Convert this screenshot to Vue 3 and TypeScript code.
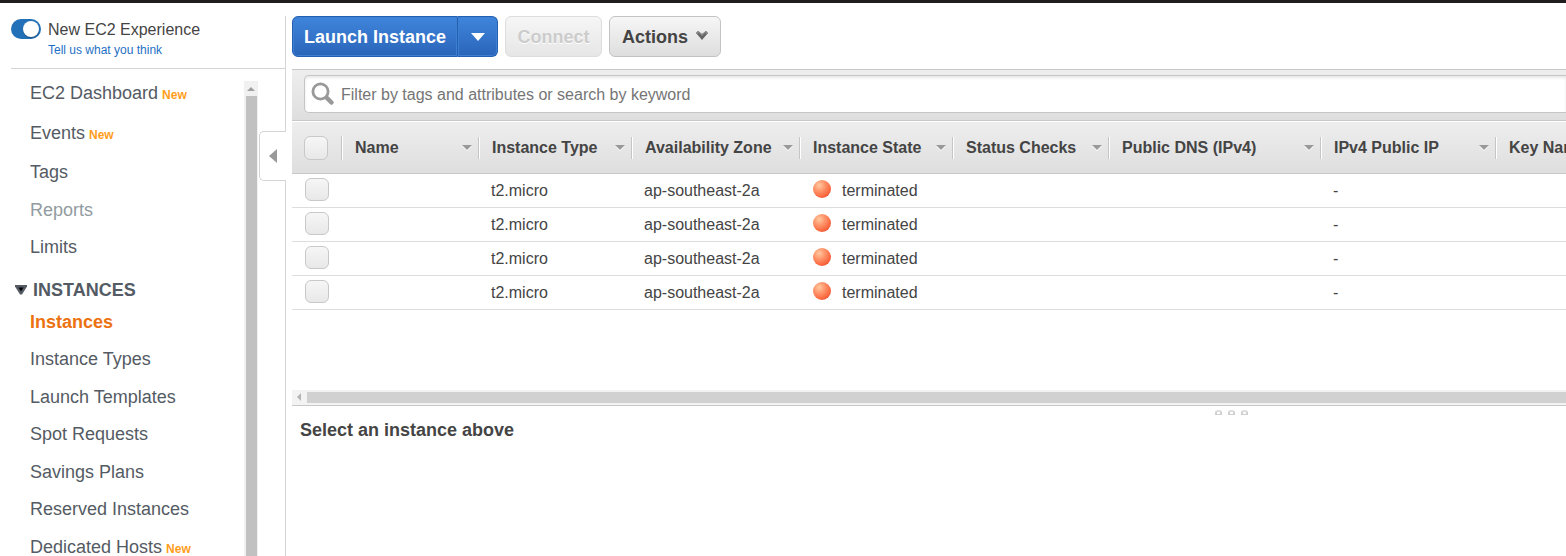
<script setup lang="ts">
import { ref } from 'vue'

interface NavItem {
  label: string
  isNew?: boolean
  muted?: boolean
  active?: boolean
}

interface Column {
  key: string
  label: string
}

interface Instance {
  id: number
  type: string
  zone: string
  state: string
  ip: string
  selected: boolean
}

const newExperience = ref(true)
const filter = ref('')
const allSelected = ref(false)

const generalNav: NavItem[] = [
  { label: 'EC2 Dashboard', isNew: true },
  { label: 'Events', isNew: true },
  { label: 'Tags' },
  { label: 'Reports', muted: true },
  { label: 'Limits' },
]

const instanceNav: NavItem[] = [
  { label: 'Instances', active: true },
  { label: 'Instance Types' },
  { label: 'Launch Templates' },
  { label: 'Spot Requests' },
  { label: 'Savings Plans' },
  { label: 'Reserved Instances' },
  { label: 'Dedicated Hosts', isNew: true },
]

const columns: Column[] = [
  { key: 'name', label: 'Name' },
  { key: 'type', label: 'Instance Type' },
  { key: 'zone', label: 'Availability Zone' },
  { key: 'state', label: 'Instance State' },
  { key: 'checks', label: 'Status Checks' },
  { key: 'dns', label: 'Public DNS (IPv4)' },
  { key: 'ip', label: 'IPv4 Public IP' },
  { key: 'keyname', label: 'Key Name' },
]

const instances = ref<Instance[]>(
  [1, 2, 3, 4].map((id) => ({
    id,
    type: 't2.micro',
    zone: 'ap-southeast-2a',
    state: 'terminated',
    ip: '-',
    selected: false,
  })),
)

function toggleAll() {
  instances.value.forEach((row) => (row.selected = allSelected.value))
}
</script>

<template>
  <div class="console">
    <aside class="sidebar">
      <header class="experience">
        <input id="experience" v-model="newExperience" class="switch" type="checkbox" />
        <div class="experience-text">
          <label for="experience">New EC2 Experience</label>
          <a href="#feedback">Tell us what you think</a>
        </div>
      </header>

      <div class="nav-pane">
        <nav class="nav" aria-label="EC2">
          <ul class="nav-list general">
            <li v-for="item in generalNav" :key="item.label">
              <a href="#" :class="{ muted: item.muted }">{{ item.label }}</a>
              <span v-if="item.isNew" class="new">New</span>
            </li>
          </ul>
          <button class="section" type="button">
            <svg width="12" height="10" viewBox="0 0 12 10" aria-hidden="true">
              <path d="M0 0h12v1.5L7 9.5H5L0 1.5z" fill="#545b64" />
              <path d="M3.5 2.5h5L6 6.5z" fill="#000" />
            </svg>
            INSTANCES
          </button>
          <ul class="nav-list services">
            <li v-for="item in instanceNav" :key="item.label">
              <a href="#" :class="{ active: item.active }">{{ item.label }}</a>
              <span v-if="item.isNew" class="new">New</span>
            </li>
          </ul>
        </nav>
        <div class="vscroll" aria-hidden="true">
          <svg width="14" height="15" viewBox="0 0 14 15"><path d="M3 10l4-4 4 4z" fill="#a0a0a0" /></svg>
          <div class="vthumb"></div>
        </div>
      </div>

      <button class="collapse" type="button" aria-label="Collapse navigation">
        <svg width="8" height="14" viewBox="0 0 8 14" aria-hidden="true"><path d="M8 0v14L0 7z" fill="#999" /></svg>
      </button>
    </aside>

    <main class="main">
      <div class="toolbar">
        <div class="split">
          <button class="btn primary launch" type="button">Launch Instance</button>
          <button class="btn primary more" type="button" aria-label="More launch options">
            <svg width="14" height="8" viewBox="0 0 14 8" aria-hidden="true"><path d="M0 0h14L7 8z" fill="#fff" /></svg>
          </button>
        </div>
        <button class="btn connect" type="button" disabled>Connect</button>
        <button class="btn actions" type="button">
          Actions
          <svg width="12" height="9" viewBox="0 0 12 9" aria-hidden="true">
            <path d="M0 2L2 0l4 3 4-3 2 2-6 7z" fill="#666" />
            <path d="M0 2L2 0l4 3 4-3 2 2-1 1-2-1-3 3-3-3-2 1z" fill="#8a8a8a" />
          </svg>
        </button>
      </div>

      <div class="filter-bar">
        <label class="filter">
          <svg width="24" height="24" viewBox="0 0 24 24" aria-hidden="true">
            <path d="M15.5 15.5l5 5" stroke="#999" stroke-width="4.5" stroke-linecap="round" />
            <circle cx="9.5" cy="9.5" r="7.6" fill="#fff" stroke="#999" stroke-width="2.8" />
          </svg>
          <input v-model="filter" type="text" aria-label="Filter instances" placeholder="Filter by tags and attributes or search by keyword" />
        </label>
      </div>

      <div class="grid">
        <table>
          <colgroup>
            <col class="c-check" />
            <col v-for="col in columns" :key="col.key" :class="'c-' + col.key" />
          </colgroup>
          <thead>
            <tr>
              <th scope="col">
                <div class="head head-check">
                  <input v-model="allSelected" class="check" type="checkbox" aria-label="Select all instances" @change="toggleAll" />
                </div>
              </th>
              <th v-for="col in columns" :key="col.key" scope="col">
                <div class="head">
                  <span>{{ col.label }}</span>
                  <svg width="10" height="7" viewBox="0 0 10 7" aria-hidden="true">
                    <path d="M0 2h10L5 7z" fill="#fff" />
                    <path d="M0 1h10L5 6z" fill="#999" />
                  </svg>
                </div>
              </th>
            </tr>
          </thead>
          <tbody>
            <tr v-for="row in instances" :key="row.id">
              <td class="cell-check">
                <input v-model="row.selected" class="check" type="checkbox" :aria-label="'Select instance ' + row.id" />
              </td>
              <td></td>
              <td>{{ row.type }}</td>
              <td>{{ row.zone }}</td>
              <td><span class="state"><i class="ball"></i>{{ row.state }}</span></td>
              <td></td>
              <td></td>
              <td>{{ row.ip }}</td>
              <td></td>
            </tr>
          </tbody>
        </table>
      </div>

      <div class="hscroll" aria-hidden="true">
        <svg width="15" height="14" viewBox="0 0 15 14"><path d="M9 3v8L5 7z" fill="#b5b5b5" /></svg>
        <div class="hthumb"></div>
      </div>

      <section class="details">
        <div class="splitter" aria-hidden="true">
          <div class="grips"><i></i><i></i><i></i></div>
        </div>
        <h2>Select an instance above</h2>
      </section>
    </main>
  </div>
</template>

<style>
body {
  margin: 0;
  background: #fff;
}
</style>

<style scoped>
.console {
  box-sizing: border-box;
  display: flex;
  gap: 6px;
  height: 100vh;
  padding-top: 13px;
  border-top: 3px solid #1f1d1d;
  overflow: hidden;
  color: #444;
  font: 16px/20px "Liberation Sans", Arial, sans-serif;
}

button,
input {
  font: inherit;
  color: inherit;
  margin: 0;
  padding: 0;
  box-sizing: border-box;
}

button {
  cursor: pointer;
}

svg {
  display: block;
  flex: none;
}

a {
  text-decoration: none;
}

.sidebar {
  position: relative;
  display: flex;
  flex-direction: column;
  flex: none;
  box-sizing: border-box;
  width: 286px;
  border-right: 1px solid #d5d5d5;
}

.experience {
  display: flex;
  gap: 7px;
  margin-left: 11px;
  padding: 3px 0 8px;
  border-bottom: 1px solid #d5d5d5;
}

.experience-text {
  display: flex;
  flex-direction: column;
  padding-top: 1px;
}

.experience-text a {
  font-size: 12px;
  color: #1f6fc4;
}

.switch {
  appearance: none;
  display: flex;
  justify-content: flex-end;
  width: 30px;
  height: 20px;
  padding: 2px;
  border-radius: 10px;
  background: #2271b8;
}

.switch::before {
  content: "";
  width: 16px;
  height: 16px;
  border-radius: 8px;
  background: #fff;
  box-shadow: 0 1px 1px #1a4f80;
}

.switch:not(:checked) {
  justify-content: flex-start;
  background: #888;
}

.nav-pane {
  display: flex;
  flex: 1;
  min-height: 0;
  margin-right: 27px;
}

.nav {
  flex: 1;
  padding-top: 4px;
  overflow: hidden;
  font-size: 18px;
  color: #545b64;
}

.nav-list {
  display: grid;
  margin: 0;
  padding: 0 0 0 30px;
  list-style: none;
}

.general {
  grid-template-rows: 40px 40px 38px 38px 36px;
}

.services {
  grid-auto-rows: 37px 38px;
  padding-top: 1px;
}

.nav-list li {
  display: flex;
  align-items: baseline;
  align-self: center;
  gap: 4px;
  white-space: nowrap;
}

.nav-list a {
  color: #545b64;
}

.nav-list a.muted {
  color: #929b9f;
}

.nav-list a.active {
  color: #ec7211;
  font-weight: bold;
}

.new {
  font-size: 12px;
  line-height: 12px;
  font-weight: bold;
  color: #ff9d1c;
}

.section {
  display: flex;
  align-items: center;
  gap: 6px;
  height: 25px;
  margin: 12px 0 0 15px;
  border: 0;
  background: none;
  font-weight: bold;
}

.vscroll {
  display: flex;
  flex-direction: column;
  width: 14px;
  margin-top: 12px;
  background: #f1f1f1;
}

.vthumb {
  flex: 1;
  margin: 0 1px 0 2px;
  background: #c1c1c1;
}

.collapse {
  position: absolute;
  top: 115px;
  right: -1px;
  display: flex;
  align-items: center;
  width: 27px;
  height: 50px;
  padding-left: 9px;
  border: 1px solid #d5d5d5;
  border-right: 0;
  border-radius: 5px 0 0 5px;
  background: #fff;
}

.main {
  display: flex;
  flex-direction: column;
  flex: 1;
  min-width: 0;
}

.toolbar {
  display: flex;
  gap: 7px;
  margin-bottom: 12px;
}

.split {
  display: flex;
}

.btn {
  display: flex;
  align-items: center;
  justify-content: center;
  gap: 8px;
  height: 41px;
  border: 1px solid #c3c3c3;
  border-radius: 6px;
  background: linear-gradient(#f6f6f6, #dedede);
  color: #444;
  font-size: 18px;
  font-weight: bold;
  white-space: nowrap;
}

.actions svg {
  margin-bottom: 2px;
}

.primary {
  border-color: #2160b5;
  background: linear-gradient(#3f85dc, #2a65b9);
  box-shadow: inset 0 0 0 1px #3f7fd0;
  color: #fff;
}

.launch {
  min-width: 166px;
  border-radius: 6px 0 0 6px;
}

.more {
  width: 40px;
  border-left: 0;
  border-radius: 0 6px 6px 0;
}

.connect {
  min-width: 97px;
  border-color: #ddd;
  background: linear-gradient(#f6f6f6, #e6e6e6);
  color: #ccc;
  text-shadow: 0 1px #fff;
}

.actions {
  min-width: 112px;
}

.filter-bar {
  padding: 5px 0 7px 12px;
  border: solid #c8c8c8;
  border-width: 1px 0;
  background: linear-gradient(#eee, #dedede);
}

.filter {
  display: flex;
  align-items: center;
  gap: 6px;
  box-sizing: border-box;
  height: 38px;
  padding-left: 6px;
  border: 1px solid #c5c5c5;
  border-right: 0;
  border-radius: 5px 0 0 5px;
  background: #fff;
  box-shadow: inset 0 2px 3px #e8e8e8;
}

.filter input {
  flex: 1;
  height: 100%;
  padding-top: 1px;
  border: 0;
  outline: 0;
  background: none;
}

.filter input::placeholder {
  color: #757575;
  opacity: 1;
}

.grid {
  flex: none;
  padding-bottom: 80px;
  overflow: hidden;
}

table {
  table-layout: fixed;
  width: 100%;
  min-width: 1360px;
  border-collapse: separate;
  border-spacing: 0;
}

.c-check { width: 50px; }
.c-name { width: 137px; }
.c-type,
.c-state { width: 153px; }
.c-zone { width: 168px; }
.c-checks { width: 156px; }
.c-dns { width: 212px; }
.c-ip { width: 175px; }

thead tr {
  background: linear-gradient(#eee, #dedede);
}

th {
  box-sizing: border-box;
  height: 53px;
  padding: 0;
  border-top: 1px solid #fff;
  border-bottom: 1px solid #c8c8c8;
}

.head {
  display: flex;
  align-items: center;
  justify-content: space-between;
  height: 22px;
  padding: 0 6px 0 13px;
  border-right: 1px solid #c5c5c5;
  box-shadow: 1px 0 #fff;
  white-space: nowrap;
}

.head-check {
  height: 24px;
  padding: 0 0 0 12px;
}

td {
  box-sizing: border-box;
  height: 34px;
  padding: 0 0 0 12px;
  border-bottom: 1px solid #ddd;
  white-space: nowrap;
}

td.cell-check {
  padding-left: 13px;
}

.check {
  appearance: none;
  display: block;
  width: 24px;
  height: 24px;
  border: 1px solid #c8c8c8;
  border-radius: 6px;
  background: linear-gradient(#f6f6f6, #e8e8e8);
}

.check:checked {
  background: #2271b8;
}

.cell-check .check {
  height: 23px;
  margin-bottom: 2px;
}

.state {
  display: flex;
  align-items: center;
  gap: 11px;
  height: 22px;
  padding-left: 1px;
}

.ball {
  width: 18px;
  height: 18px;
  margin-bottom: 4px;
  border-radius: 9px;
  background: radial-gradient(circle at 35% 30%, #ffc9a0 0, #ff9a70 30%, #fb6a42 65%, #d23a1c 100%);
}

.hscroll {
  display: flex;
  height: 15px;
  flex: none;
  background: #f3f3f3;
}

.hthumb {
  flex: 1;
  margin: 2px 0;
  background: #d1d1d1;
}

.details {
  border-top: 1px solid #c8c8c8;
}

.splitter {
  display: grid;
  grid-template-columns: 923fr 351fr;
  height: 14px;
}

.grips {
  grid-column: 2;
  display: flex;
  align-items: center;
  gap: 6px;
  padding-bottom: 2px;
}

.grips i {
  box-sizing: border-box;
  width: 7px;
  height: 5px;
  border: 2px solid #d0d0d0;
  border-top-color: #ddd;
  border-bottom-width: 1px;
  border-radius: 3px 3px 0 0;
}

h2 {
  margin: 0 0 0 8px;
  font-size: 18px;
  line-height: 20px;
}
</style>
